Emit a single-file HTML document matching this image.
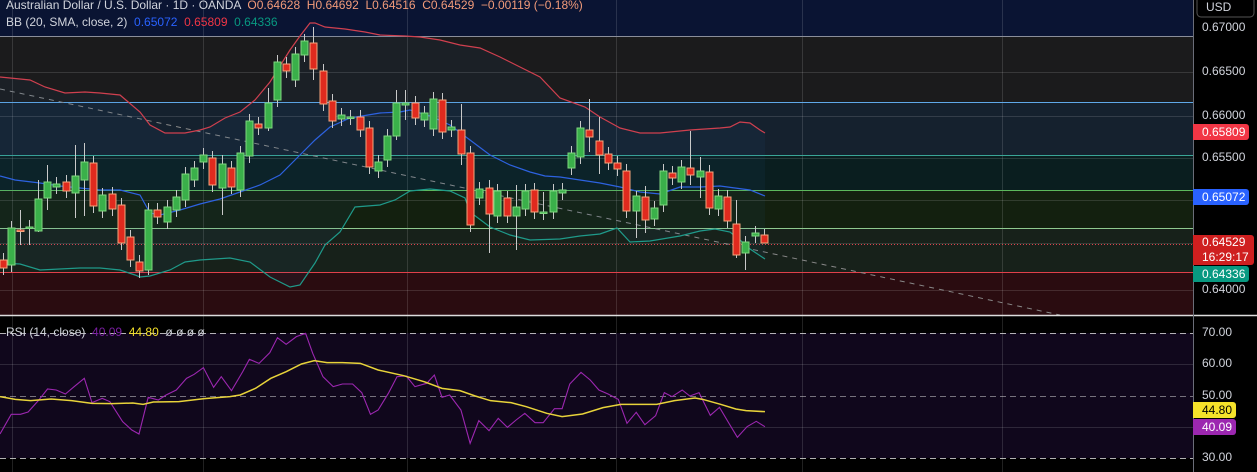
<!DOCTYPE html>
<html><head><meta charset="utf-8"><style>
html,body{margin:0;padding:0;background:#000;width:1257px;height:472px;overflow:hidden;font-family:"Liberation Sans",sans-serif}
.t{position:absolute;font-size:12px;white-space:nowrap}
</style></head><body>
<svg id="s" width="1257" height="472" style="position:absolute;left:0;top:0">
<rect x="0" y="0" width="1193" height="36" fill="#0a1433"/>
<rect x="0" y="36" width="1193" height="66" fill="#1b1b1c"/>
<rect x="0" y="102" width="1193" height="53" fill="#15212e"/>
<rect x="0" y="155" width="1193" height="35" fill="#0a1e1f"/>
<rect x="0" y="190" width="1193" height="38" fill="#13200f"/>
<rect x="0" y="228" width="1193" height="44" fill="#17211a"/>
<rect x="0" y="272" width="1193" height="43" fill="#2a0c10"/>
<rect x="0" y="333" width="1193" height="125" fill="#10071c"/>
<g stroke="#ffffff" stroke-opacity="0.13" stroke-width="1">
<line x1="12.5" y1="0" x2="12.5" y2="472"/><line x1="203.5" y1="0" x2="203.5" y2="472"/><line x1="407.5" y1="0" x2="407.5" y2="472"/><line x1="616.5" y1="0" x2="616.5" y2="472"/><line x1="802.5" y1="0" x2="802.5" y2="472"/><line x1="1002.5" y1="0" x2="1002.5" y2="472"/>
<line x1="0" y1="72.5" x2="1193" y2="72.5"/><line x1="0" y1="116.5" x2="1193" y2="116.5"/><line x1="0" y1="158.5" x2="1193" y2="158.5"/><line x1="0" y1="200.5" x2="1193" y2="200.5"/><line x1="0" y1="243.5" x2="1193" y2="243.5"/><line x1="0" y1="290.5" x2="1193" y2="290.5"/>
<line x1="0" y1="364.5" x2="1193" y2="364.5"/><line x1="0" y1="427.5" x2="1193" y2="427.5"/>
</g>
<line x1="0" y1="36.5" x2="1193" y2="36.5" stroke="#8a8e9a"/>
<line x1="0" y1="102.5" x2="1193" y2="102.5" stroke="#5fa8e8"/>
<line x1="0" y1="155.5" x2="1193" y2="155.5" stroke="#3aa596"/>
<line x1="0" y1="190.5" x2="1193" y2="190.5" stroke="#5cb85c"/>
<line x1="0" y1="228.5" x2="1193" y2="228.5" stroke="#8fc98f"/>
<line x1="0" y1="272.5" x2="1193" y2="272.5" stroke="#e0404a"/>
<line x1="0" y1="244.5" x2="1193" y2="244.5" stroke="#e0404a" stroke-dasharray="1,2"/>
<line x1="0" y1="89" x2="1060" y2="315" stroke="#888" stroke-dasharray="5,5"/>
<line x1="0" y1="315.5" x2="1257" y2="315.5" stroke="#ddd" stroke-width="1.5"/>
<line x1="1193.5" y1="0" x2="1193.5" y2="472" stroke="#6a6d78"/>
<g stroke="#ddd" stroke-dasharray="6,4" stroke-opacity="0.8"><line x1="0" y1="333.5" x2="1193" y2="333.5"/><line x1="0" y1="396.5" x2="1193" y2="396.5" stroke-opacity="0.5"/><line x1="0" y1="458.5" x2="1193" y2="458.5"/></g>
<g id="bands" fill="none" stroke-width="1.2"></g>
<g id="c"></g>
<g id="rsi" fill="none" transform="translate(0,310) scale(0.511,0.33333)"></g>
<rect x="1197" y="-4" width="57" height="21" rx="4" fill="#000" stroke="#555"/>
</svg>
<div class="t" style="left:6px;top:-2px;color:#d1d4dc">Australian Dollar / U.S. Dollar · 1D · OANDA &nbsp;<span style="color:#f29b7a">O0.64628 &nbsp;H0.64692 &nbsp;L0.64516 &nbsp;C0.64529 &nbsp;−0.00119 (−0.18%)</span></div>
<div class="t" style="left:6px;top:15px;color:#d1d4dc">BB (20, SMA, close, 2) &nbsp;<span style="color:#2962ff">0.65072</span> &nbsp;<span style="color:#f23645">0.65809</span> &nbsp;<span style="color:#089981">0.64336</span></div>
<div class="t" style="left:6px;top:325px;color:#d1d4dc;font-size:12px">RSI (14, close) &nbsp;<span style="color:#7b1fa2">40.09</span> &nbsp;<span style="color:#f5e12a">44.80</span> &nbsp;ø ø ø ø</div>
<div class="t" style="left:1206px;top:0px;color:#d1d4dc">USD</div>
<div style="position:absolute;left:1193px;top:0;width:64px;font-size:12px;color:#d1d4dc">
<div class="t" style="left:9px;top:20px">0.67000</div>
<div class="t" style="left:9px;top:64px">0.66500</div>
<div class="t" style="left:9px;top:108px">0.66000</div>
<div class="t" style="left:9px;top:150px">0.65500</div>
<div class="t" style="left:9px;top:282px">0.64000</div>
<div class="t" style="left:9px;top:325px">70.00</div>
<div class="t" style="left:9px;top:356px">60.00</div>
<div class="t" style="left:9px;top:388px">50.00</div>
<div class="t" style="left:9px;top:450px">30.00</div>
<div class="t" style="left:0;top:124px;width:56px;height:16px;background:#f23645;color:#fff;border-radius:0 3px 3px 0;padding-left:9px;box-sizing:border-box;line-height:16px">0.65809</div>
<div class="t" style="left:0;top:189px;width:56px;height:16px;background:#2962ff;color:#fff;border-radius:0 3px 3px 0;padding-left:9px;box-sizing:border-box;line-height:16px">0.65072</div>
<div class="t" style="left:0;top:235px;width:61px;height:30px;background:#cf1f1f;color:#fff;border-radius:0 3px 3px 0;padding-left:9px;box-sizing:border-box;line-height:15px">0.64529<br>16:29:17</div>
<div class="t" style="left:0;top:266px;width:56px;height:16px;background:#089981;color:#fff;border-radius:0 3px 3px 0;padding-left:9px;box-sizing:border-box;line-height:16px">0.64336</div>
<div class="t" style="left:0;top:402px;width:43px;height:16px;background:#f5e12a;color:#000;border-radius:0 3px 3px 0;padding-left:9px;box-sizing:border-box;line-height:16px">44.80</div>
<div class="t" style="left:0;top:419px;width:43px;height:16px;background:#9c27b0;color:#fff;border-radius:0 3px 3px 0;padding-left:9px;box-sizing:border-box;line-height:16px">40.09</div>
</div>
<script>
var NS="http://www.w3.org/2000/svg";
function el(p,t,a){var e=document.createElementNS(NS,t);for(var k in a)e.setAttribute(k,a[k]);p.appendChild(e);return e;}
function pts(a){return a.map(function(p){return p.join(",")}).join(" ");}
var up=[[0,77],[30,80],[45,87],[65,93],[85,92],[100,93],[120,95],[140,112],[150,125],[165,133],[185,133],[200,130],[210,127],[225,118],[240,112],[255,100],[270,82],[290,50],[300,36],[310,23],[315,23],[325,27],[345,29],[365,32],[380,35],[405,36],[420,37],[440,40],[460,45],[480,48],[500,57],[520,67],[540,77],[560,98],[585,107],[600,117],[620,128],[640,133],[660,133],[690,130],[720,128],[730,127],[740,122],[750,123],[760,130],[765,133]];
var mid=[[0,176],[15,180],[40,183],[60,186],[80,188],[100,190],[120,190],[140,195],[150,213],[160,215],[180,210],[200,204],[220,199],[240,192],[260,185],[280,175],[300,155],[315,140],[330,127],[350,118],[380,113],[400,112],[410,110],[430,116],[450,125],[470,140],[490,155],[510,165],[530,172],[545,176],[560,177],[580,180],[600,183],[620,187],[640,192],[660,194],[680,187],[700,187],[720,186],[735,188],[750,190],[765,196]];
var lo=[[0,263],[20,264],[40,270],[80,268],[100,268],[120,270],[135,275],[140,277],[150,276],[170,270],[185,262],[200,260],[230,258],[250,262],[270,277],[290,287],[300,285],[315,263],[325,245],[340,232],[355,207],[380,205],[395,200],[410,191],[430,189],[450,191],[465,198],[470,212],[490,227],[510,235],[530,240],[560,239],[580,236],[600,234],[617,228],[630,242],[650,241],[680,236],[700,231],[715,229],[730,232],[740,240],[750,249],[765,259]];
var b=document.getElementById("bands");
el(b,"polygon",{points:pts(up.concat(lo.slice().reverse())),fill:"#2a6aa0","fill-opacity":"0.08",stroke:"none"});
el(b,"polyline",{points:pts(up),stroke:"#d0404f"});
el(b,"polyline",{points:pts(mid),stroke:"#2d62e0"});
el(b,"polyline",{points:pts(lo),stroke:"#1f9a8a"});
var C=[[3,260,268,'r'],[11,228,265,'g'],[20,230,231,'r',210,245],[29,227,228,'g',220,245],[38,199,231,'g',180,232],[47,182,198,'g',165,210],[56,184,187,'g'],[66,182,191,'r'],[75,176,193,'g',145,218],[84,162,180,'g',143,216],[93,163,206,'r'],[102,195,211,'g'],[112,194,209,'r'],[121,205,243,'r'],[130,237,260,'r'],[139,262,271,'r'],[148,210,270,'g',203,275],[157,210,217,'r'],[167,207,222,'g'],[176,197,210,'g'],[185,174,200,'g'],[194,168,180,'g'],[203,155,162,'g'],[212,158,185,'r'],[222,164,188,'g',155,215],[231,168,187,'r'],[240,153,190,'g'],[249,121,156,'g'],[258,124,128,'r'],[268,103,128,'g',88,131],[277,62,100,'g'],[286,64,71,'r'],[295,54,80,'g'],[304,41,55,'g'],[313,43,69,'r',27,80],[323,71,104,'r'],[332,101,121,'r'],[341,115,119,'g'],[350,117,118,'g'],[360,117,130,'r'],[369,128,167,'r'],[378,162,171,'g'],[387,136,160,'g'],[396,103,136,'g',90,140],[405,103,105,'g',90,120],[415,103,118,'r'],[424,113,120,'g'],[433,99,129,'g'],[442,100,132,'r'],[451,127,130,'g'],[461,130,154,'r',104,165],[470,153,225,'r'],[479,189,198,'g'],[489,188,214,'r',180,253],[497,191,216,'g'],[507,198,216,'r'],[516,207,216,'g',185,250],[525,191,209,'g'],[534,190,212,'r'],[543,212,213,'g',192,220],[553,191,212,'g'],[562,190,193,'g'],[571,153,168,'g'],[580,128,157,'g'],[589,130,137,'r',99,152],[599,141,155,'r',117,174],[608,154,163,'r'],[617,163,169,'r'],[626,171,211,'r'],[636,196,211,'g',191,238],[645,197,220,'r',186,233],[654,208,219,'g'],[663,171,205,'g'],[672,173,178,'r'],[681,167,182,'g'],[690,168,175,'r',131,185],[700,171,177,'g',157,198],[709,172,208,'r'],[718,196,209,'g'],[727,197,221,'r'],[736,224,255,'r',200,258],[745,242,253,'g',236,270],[755,233,236,'g'],[764,235,243,'r',229,243]];
var g=document.getElementById("c");
C.forEach(function(c){var x=c[0],t=c[1],bt=c[2],wt=c[4]!=null?c[4]:t-7,wb=c[5]!=null?c[5]:bt+7;
el(g,"line",{x1:x+.5,x2:x+.5,y1:wt,y2:wb,stroke:"#c9c9c9","stroke-width":1});
var h=Math.max(bt-t,1.5);
if(c[3]=='g')el(g,"rect",{x:x-3,y:t,width:7,height:h,fill:"#3ab04a",stroke:"#7fd67f","stroke-width":1});
else el(g,"rect",{x:x-3,y:t,width:7,height:h,fill:"#e02a1e",stroke:"#f4a57c","stroke-width":1});});
var R=[[0,372],[22,313],[40,313],[55,306],[75,272],[93,237],[110,240],[128,252],[145,230],[165,205],[180,278],[200,265],[215,275],[240,335],[258,360],[272,372],[290,262],[310,270],[325,255],[345,240],[365,205],[380,193],[398,173],[418,232],[433,200],[453,242],[475,185],[488,148],[507,160],[528,128],[543,83],[560,103],[580,80],[598,70],[612,130],[632,200],[652,230],[670,222],[690,222],[708,248],[725,313],[740,300],[760,250],[777,200],[795,198],[812,230],[835,220],[850,195],[865,262],[880,255],[902,300],[920,400],[937,332],[957,362],[975,325],[993,352],[1010,330],[1027,310],[1047,338],[1063,338],[1085,296],[1100,296],[1115,222],[1137,187],[1155,210],[1172,240],[1190,252],[1210,268],[1227,340],[1245,307],[1262,344],[1283,317],[1300,248],[1315,260],[1335,240],[1350,258],[1368,248],[1390,316],[1408,292],[1425,336],[1443,382],[1462,350],[1480,334],[1497,350]];
var Y=[[0,260],[30,268],[60,272],[100,267],[140,272],[180,280],[220,281],[260,279],[280,283],[300,276],[350,275],[400,266],[450,260],[470,255],[500,235],[530,205],[560,185],[590,162],[615,152],[640,158],[670,158],[705,160],[740,180],[790,197],[830,215],[865,235],[900,242],[930,258],[960,272],[1000,278],[1030,290],[1070,310],[1100,320],[1140,312],[1180,293],[1215,283],[1250,283],[1285,283],[1320,272],[1360,264],[1375,268],[1410,283],[1440,297],[1460,302],[1497,305]];
var r=document.getElementById("rsi");
el(r,"polyline",{points:pts(R),stroke:"#9c27b0","stroke-width":1.1,"vector-effect":"non-scaling-stroke"});
el(r,"polyline",{points:pts(Y),stroke:"#e8d33a","stroke-width":1.5,"vector-effect":"non-scaling-stroke"});
</script>
</body></html>
